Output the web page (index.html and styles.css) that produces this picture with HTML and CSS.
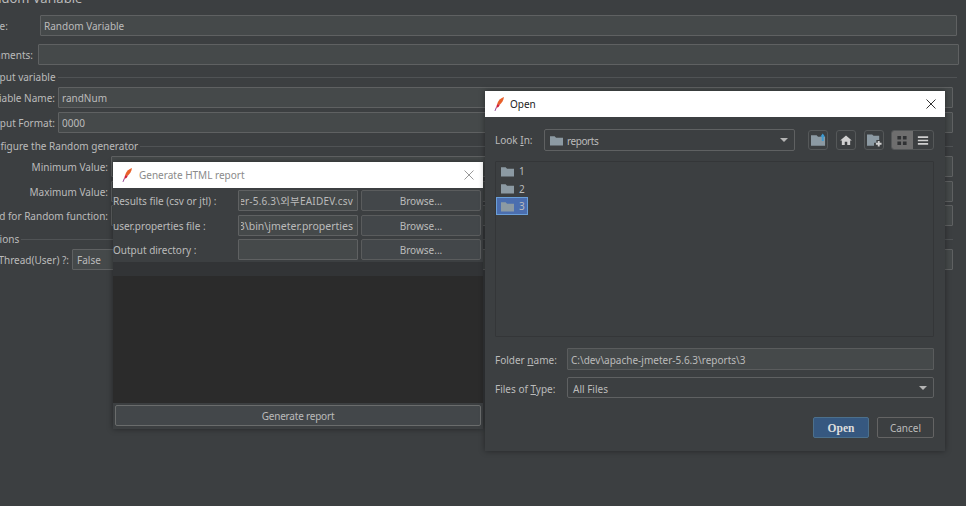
FILE: index.html
```html
<!DOCTYPE html>
<html lang="en">
<head>
    <meta charset="UTF-8">
    <meta name="viewport" content="width=device-width, initial-scale=1.0">
    <title>Random Variable</title>
    <link rel="stylesheet" href="styles.css">
</head>
<body>
    <div class="form-panel">
        <div class="panel-title">Random Variable</div>
        <div class="row row-name">
            <label>Name:</label>
            <div class="field">Random Variable</div>
        </div>
        <div class="row row-comments">
            <label>Comments:</label>
            <div class="field"></div>
        </div>

        <div class="group-title group-wide">Output variable</div>
        <div class="group-body group-var">
            <div class="row row-var">
                <label>Variable Name:</label>
                <div class="field">randNum</div>
            </div>
            <div class="row row-var">
                <label>Output Format:</label>
                <div class="field">0000</div>
            </div>
        </div>

        <div class="group-title">Configure the Random generator</div>
        <div class="group-body">
            <div class="row row-gen">
                <label>Minimum Value:</label>
                <div class="field"></div>
            </div>
            <div class="row row-gen">
                <label>Maximum Value:</label>
                <div class="field"></div>
            </div>
            <div class="row row-gen">
                <label>Seed for Random function:</label>
                <div class="field"></div>
            </div>
        </div>

        <div class="group-title">Options</div>
        <div class="group-body">
            <div class="row row-thread">
                <label>Per Thread(User) ?:</label>
                <div class="field">False</div>
            </div>
        </div>
    </div>

    <div class="window report-window">
        <div class="titlebar titlebar-inactive">
            <svg class="feather" viewBox="0 0 10 14"><path class="feather-top" d="M10 0C7 1 4.500 3 3.500 6L3 8L6 7.500C8 5.500 9.500 3 10 0Z"/><path class="feather-low" d="M3 7.500L6 7.500L4.500 10L2 11Z"/><path class="feather-tail" d="M1.800 10.500L0.500 14L1.300 14L2.800 10.800Z"/></svg>
            <span class="window-title">Generate HTML report</span>
            <svg class="close" viewBox="0 0 10 10"><path d="M0.500 0.500L9.500 9.500M9.500 0.500L0.500 9.500"/></svg>
        </div>
        <div class="report-rows">
            <div class="report-row">
                <label>Results file (csv or jtl) :</label>
                <div class="field clip-field"><div class="clip-inner"><span>C:\dev\apache-jmeter-5.6.3\<b class="ko">외부</b>EAIDEV.csv</span></div></div>
                <div class="btn browse">Browse...</div>
            </div>
            <div class="report-row">
                <label>user.properties file :</label>
                <div class="field clip-field"><div class="clip-inner clip-props"><span>C:\dev\apache-jmeter-5.6.3\bin\jmeter.properties</span></div></div>
                <div class="btn browse">Browse...</div>
            </div>
            <div class="report-row">
                <label>Output directory :</label>
                <div class="field clip-field"></div>
                <div class="btn browse">Browse...</div>
            </div>
        </div>
        <div class="report-log"></div>
        <div class="report-footer">
            <div class="btn generate">Generate report</div>
        </div>
    </div>

    <div class="window open-window">
        <div class="titlebar">
            <svg class="feather" viewBox="0 0 10 14"><path class="feather-top" d="M10 0C7 1 4.500 3 3.500 6L3 8L6 7.500C8 5.500 9.500 3 10 0Z"/><path class="feather-low" d="M3 7.500L6 7.500L4.500 10L2 11Z"/><path class="feather-tail" d="M1.800 10.500L0.500 14L1.300 14L2.800 10.800Z"/></svg>
            <span class="window-title">Open</span>
            <svg class="close" viewBox="0 0 10 10"><path d="M0.500 0.500L9.500 9.500M9.500 0.500L0.500 9.500"/></svg>
        </div>
        <div class="open-body">
            <div class="look-row">
                <label class="open-label">Look <u>I</u>n:</label>
                <div class="combo look-combo">
                    <svg class="folder" viewBox="0 0 14 11"><path d="M0 1V11H14V2.500H6.500L5 1Z"/></svg>
                    <span>reports</span>
                    <i class="arrow"></i>
                </div>
                <div class="tool-btn tool-up">
                    <svg viewBox="0 0 16 14"><path class="icon-fill" d="M0 2H6L7.500 3.500H15V13H0Z"/><path class="icon-blue" d="M12.500 0L15 3.500H13.500V8H11.500V3.500H10Z"/></svg>
                </div>
                <div class="tool-btn tool-home">
                    <svg viewBox="0 0 14 12"><path class="icon-white" d="M7 0.500L14 6.500H12V12H8.500V8H5.500V12H2V6.500H0Z"/></svg>
                </div>
                <div class="tool-btn tool-new">
                    <svg viewBox="0 0 16 14"><path class="icon-fill" d="M0 1H5.500L7 2.500H13V7H10V10H7.500V13H0Z"/><path class="icon-white" d="M11.500 8H13.500V10H15.500V12H13.500V14H11.500V12H9.500V10H11.500Z"/></svg>
                </div>
                <div class="view-toggle">
                    <div class="view-btn view-on">
                        <svg viewBox="0 0 12 12"><path class="icon-dark" d="M1 1H5V5H1ZM7 1H11V5H7ZM1 7H5V11H1ZM7 7H11V11H7Z"/></svg>
                    </div>
                    <div class="view-btn">
                        <svg viewBox="0 0 14 12"><path class="icon-white" d="M1 1H13V3H1ZM1 5H13V7H1ZM1 9H13V11H1Z"/></svg>
                    </div>
                </div>
            </div>
            <div class="file-list">
                <div class="file-item">
                    <svg class="folder" viewBox="0 0 14 11"><path d="M0 1V11H14V2.500H6.500L5 1Z"/></svg>
                    <span>1</span>
                </div>
                <div class="file-item">
                    <svg class="folder" viewBox="0 0 14 11"><path d="M0 1V11H14V2.500H6.500L5 1Z"/></svg>
                    <span>2</span>
                </div>
                <div class="file-item file-selected">
                    <svg class="folder" viewBox="0 0 14 11"><path d="M0 1V11H14V2.500H6.500L5 1Z"/></svg>
                    <span>3</span>
                </div>
            </div>
            <div class="name-row">
                <label class="open-label wide-label">Folder <u>n</u>ame:</label>
                <div class="field name-field">C:\dev\apache-jmeter-5.6.3\reports\3</div>
            </div>
            <div class="type-row">
                <label class="open-label wide-label">Files of <u>T</u>ype:</label>
                <div class="combo type-combo">
                    <span>All Files</span>
                    <i class="arrow"></i>
                </div>
            </div>
            <div class="open-actions">
                <div class="btn btn-primary">Open</div>
                <div class="btn btn-cancel">Cancel</div>
            </div>
        </div>
    </div>
</body>
</html>
```

FILE: styles.css
```css
html, body {
    margin: 0;
    height: 100%;
    overflow: hidden;
}
body {
    position: relative;
    width: 966px;
    height: 506px;
    background: #3c3f41;
    color: #bbbbbb;
    font-family: "Noto Sans", "Noto Sans CJK KR", sans-serif;
    font-size: 10px;
}
label {
    white-space: nowrap;
}

/* background form, its left edge runs off the screen */
.form-panel {
    display: flex;
    flex-direction: column;
    height: 506px;
    margin-left: -54px;
    padding-right: 13px;
    box-sizing: border-box;
}
.panel-title {
    height: 15px;
    margin-top: -9px;
    margin-bottom: 9px;
    padding-left: 32px;
    font-size: 13px;
    line-height: 15px;
}
.row {
    display: flex;
    align-items: center;
    height: 21px;
}
.row label {
    padding-top: 1px;
    padding-right: 3px;
    text-align: right;
    box-sizing: border-box;
}
.row .field {
    flex: 1;
}
.field {
    box-sizing: border-box;
    height: 21px;
    padding: 0 3px;
    line-height: 21px;
    background: #45494a;
    border: 1px solid #5f6162;
    border-radius: 1px;
    white-space: nowrap;
    overflow: hidden;
}
.row-name {
    margin-right: -4px;
    margin-bottom: 8px;
}
.row-name label {
    width: 94px;
    padding-left: 31px;
    text-align: left;
}
.row-comments {
    margin-right: -6px;
}
.row-comments label {
    width: 92px;
    padding-left: 33px;
    padding-right: 0;
    text-align: left;
}
.group-title {
    display: flex;
    align-items: center;
    gap: 2px;
    height: 12px;
    margin-top: 6px;
    margin-left: 36px;
    line-height: 12px;
}
.group-title::after {
    content: "";
    flex: 1;
    height: 1px;
    background: #505355;
}
.group-wide {
    margin-right: -4px;
}
.group-body {
    display: flex;
    flex-direction: column;
    gap: 3.500px;
    margin-top: 4px;
    margin-bottom: 1px;
}
.group-var {
    gap: 4px;
}
.row-var label {
    width: 112px;
}
.row-gen label {
    width: 165px;
}
.row-thread label {
    width: 126px;
}
.row-thread .field {
    padding-left: 4px;
}

/* floating windows */
.window {
    position: absolute;
    display: flex;
    flex-direction: column;
    box-sizing: border-box;
    background: #3c3f41;
    box-shadow: 0 0 6px rgba(0, 0, 0, 0.4);
}
.report-window {
    left: 113px;
    top: 162px;
    width: 370px;
    height: 267px;
}
.open-window {
    left: 485px;
    top: 91px;
    width: 460px;
    height: 360px;
}
.titlebar {
    display: flex;
    align-items: center;
    flex: none;
    height: 26px;
    padding: 0 9px 0 9px;
    background: #ffffff;
    color: #222222;
}
.titlebar-inactive {
    color: #8a8a8a;
}
.window-title {
    flex: 1;
    margin-left: 7px;
}
.open-window .window-title {
    margin-left: 6px;
}
.feather {
    width: 10px;
    height: 14px;
}
.feather-top {
    fill: #e8602a;
}
.feather-low {
    fill: #d0203c;
}
.feather-tail {
    fill: #8c3a8c;
}
.close {
    width: 10px;
    height: 10px;
}
.close path {
    fill: none;
    stroke: #333333;
    stroke-width: 1;
}
.titlebar-inactive .close path {
    stroke: #999999;
}

.btn {
    box-sizing: border-box;
    text-align: center;
    white-space: nowrap;
    background: #43474a;
    border: 1px solid #5a5c5d;
    border-radius: 2px;
}

/* Generate HTML report */
.report-rows {
    display: flex;
    flex-direction: column;
    gap: 3.500px;
    padding: 2px 2px 2px 0;
}
.report-row {
    display: flex;
    align-items: center;
    height: 21px;
}
.report-row label {
    width: 125px;
    padding-top: 1px;
    box-sizing: border-box;
}
.clip-field {
    width: 120px;
    margin-right: 3px;
    padding: 0 4px 0 2px;
}
.clip-inner {
    display: flex;
    justify-content: flex-end;
    overflow: hidden;
}
.clip-inner span {
    flex: none;
    letter-spacing: 0.2px;
}
.clip-props span {
    font-size: 10.500px;
    letter-spacing: 0;
}
.ko {
    font-size: 10.500px;
    font-weight: normal;
}
.browse {
    flex: 1;
    height: 21px;
    line-height: 21px;
}
.report-log {
    flex: 1;
    background: #2b2b2b;
    border-top: 14px solid #323436;
}
.report-footer {
    padding: 2px 2px 3px;
    background: #3c3f41;
}
.generate {
    height: 21px;
    line-height: 21px;
    border-color: #6a6c6c;
    letter-spacing: -0.2px;
}

/* Open dialog */
.open-body {
    display: flex;
    flex-direction: column;
    flex: 1;
    padding: 12px 11px 11px 10px;
}
.open-label {
    white-space: nowrap;
}
.open-label u {
    text-underline-offset: 1px;
}
.look-row {
    display: flex;
    align-items: center;
    height: 22px;
}
.look-row .open-label {
    width: 49px;
}
.combo {
    display: flex;
    align-items: center;
    box-sizing: border-box;
    height: 21px;
    background: #3c3f41;
    border: 1px solid #5f6162;
    border-radius: 2px;
}
.look-combo {
    width: 252px;
    height: 22px;
    padding: 0 6px 0 5px;
    margin-right: 13px;
}
.combo span {
    flex: 1;
    padding-top: 1px;
}
.look-combo span {
    margin-left: 4px;
    letter-spacing: -0.4px;
}
.type-combo span {
    padding-top: 2px;
}
.folder {
    flex: none;
    width: 13px;
    height: 11px;
    fill: #8c9aa3;
}
.arrow {
    width: 0;
    height: 0;
    border-left: 4px solid transparent;
    border-right: 4px solid transparent;
    border-top: 4px solid #b4b4b4;
}
.tool-btn {
    display: flex;
    align-items: center;
    justify-content: center;
    box-sizing: border-box;
    width: 20px;
    height: 20px;
    margin-right: 8px;
    border: 1px solid #555859;
    border-radius: 3px;
}
.tool-btn svg {
    width: 15px;
    height: 14px;
}
.tool-home svg {
    width: 12px;
    height: 10px;
}
.tool-new {
    margin-right: 7px;
}
.icon-fill {
    fill: #8c9aa3;
}
.icon-blue {
    fill: #3d9ad1;
}
.icon-white {
    fill: #d0d0d0;
}
.icon-dark {
    fill: #2f3133;
}
.view-toggle {
    display: flex;
    width: 43px;
    height: 20px;
    border-radius: 3px;
    overflow: hidden;
    box-sizing: border-box;
    border: 1px solid #555859;
}
.view-btn {
    flex: 1;
    display: flex;
    align-items: center;
    justify-content: center;
}
.view-btn svg {
    width: 12px;
    height: 11px;
}
.view-on {
    background: #6e6e6e;
}
.file-list {
    box-sizing: border-box;
    height: 176px;
    margin-top: 10px;
    border: 1px solid #343638;
    border-radius: 1px;
}
.file-item {
    display: flex;
    align-items: center;
    gap: 5px;
    box-sizing: border-box;
    width: 32px;
    height: 17.500px;
    padding: 1px 0 0 5px;
}
.file-selected {
    background: #4b6eaf;
    outline: 1px solid #6a9fd8;
    outline-offset: -1px;
}
.name-row, .type-row {
    display: flex;
    align-items: center;
    height: 21px;
}
.name-row {
    height: 22px;
    margin-top: 11px;
}
.type-row {
    margin-top: 7px;
}
.wide-label {
    width: 72px;
    padding-top: 2px;
}
.name-field {
    flex: 1;
    height: 22px;
    line-height: 22px;
    border-color: #5a5c5d;
}
.type-combo {
    flex: 1;
    padding: 0 6px 0 5px;
}
.open-actions {
    display: flex;
    justify-content: flex-end;
    gap: 8px;
    margin-top: 19px;
}
.btn-primary {
    width: 56px;
    height: 21px;
    line-height: 20px;
    background: #365880;
    border-color: #4c708c;
    color: #dddddd;
    font-family: "Liberation Serif", serif;
    font-size: 11.500px;
    font-weight: bold;
}
.btn-cancel {
    width: 57px;
    height: 21px;
    line-height: 21px;
    background: #3c3f41;
    border-color: #646464;
}
```
